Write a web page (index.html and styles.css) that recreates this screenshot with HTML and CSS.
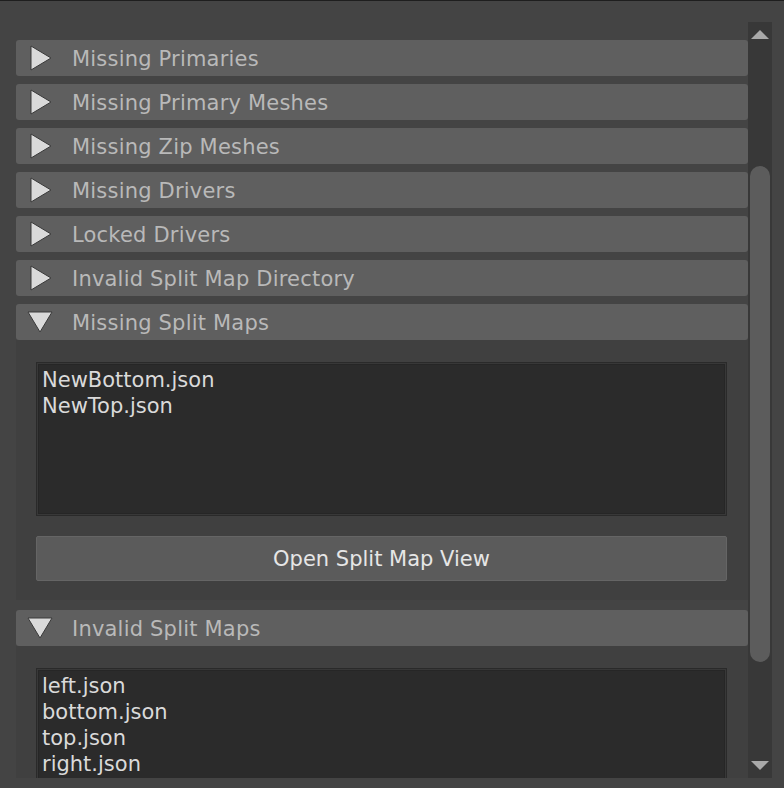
FILE: index.html
```html
<!DOCTYPE html>
<html>
<head>
<meta charset="utf-8">
<link rel="stylesheet" href="styles.css">
</head>
<body>
<div class="frame">
  <div class="content">
    <div class="section">
      <div class="header"><svg class="tri" viewBox="0 0 26 26"><polygon points="4,1 4,25 24,13" /></svg><span>Missing Primaries</span></div>
    </div>
    <div class="section">
      <div class="header"><svg class="tri" viewBox="0 0 26 26"><polygon points="4,1 4,25 24,13" /></svg><span>Missing Primary Meshes</span></div>
    </div>
    <div class="section">
      <div class="header"><svg class="tri" viewBox="0 0 26 26"><polygon points="4,1 4,25 24,13" /></svg><span>Missing Zip Meshes</span></div>
    </div>
    <div class="section">
      <div class="header"><svg class="tri" viewBox="0 0 26 26"><polygon points="4,1 4,25 24,13" /></svg><span>Missing Drivers</span></div>
    </div>
    <div class="section">
      <div class="header"><svg class="tri" viewBox="0 0 26 26"><polygon points="4,1 4,25 24,13" /></svg><span>Locked Drivers</span></div>
    </div>
    <div class="section">
      <div class="header"><svg class="tri" viewBox="0 0 26 26"><polygon points="4,1 4,25 24,13" /></svg><span>Invalid Split Map Directory</span></div>
    </div>
    <div class="section open">
      <div class="header"><svg class="tri" viewBox="0 0 26 26"><polygon points="1,3 25,3 13,23" /></svg><span>Missing Split Maps</span></div>
      <div class="body">
        <div class="list">
          <div>NewBottom.json</div>
          <div>NewTop.json</div>
        </div>
        <div class="button">Open Split Map View</div>
      </div>
    </div>
    <div class="section open">
      <div class="header"><svg class="tri" viewBox="0 0 26 26"><polygon points="1,3 25,3 13,23" /></svg><span>Invalid Split Maps</span></div>
      <div class="body">
        <div class="list tall">
          <div>left.json</div>
          <div>bottom.json</div>
          <div>top.json</div>
          <div>right.json</div>
        </div>
      </div>
    </div>
  </div>
  <div class="scrollbar">
    <svg class="arrow" viewBox="0 0 18 9"><polygon points="9,0 18,9 0,9" /></svg>
    <div class="track">
      <div class="thumb"></div>
    </div>
    <svg class="arrow" viewBox="0 0 18 9"><polygon points="0,0 18,0 9,9" /></svg>
  </div>
</div>
</body>
</html>
```

FILE: styles.css
```css
html, body {
  margin: 0;
  padding: 0;
}
body {
  background: #444444;
  width: 784px;
  height: 788px;
  overflow: hidden;
  border-top: 1px solid #1e1e1e;
  box-sizing: border-box;
  font-family: "DejaVu Sans", "Liberation Sans", sans-serif;
}
.frame {
  display: flex;
  height: 777px;
  padding-right: 12px;
}
.content {
  flex: 1;
  overflow: hidden;
  padding: 39px 0 0 16px;
  display: flex;
  flex-direction: column;
  gap: 8px;
}
.section.open + .section.open {
  margin-top: 2px;
}
.header {
  height: 36px;
  background: #5f5f5f;
  border-radius: 3px;
  display: flex;
  align-items: center;
  color: #b9b9b9;
  font-size: 21px;
  letter-spacing: 0.2px;
}
.header span {
  padding-top: 1px;
}
.tri {
  width: 26px;
  height: 26px;
  margin-left: 11px;
  margin-right: 19px;
  flex: none;
}
.tri polygon {
  fill: #dadada;
  stroke: #3a3a3a;
  stroke-width: 1;
}
.body {
  background: #404040;
  padding: 22px 21px 19px 20px;
  display: flex;
  flex-direction: column;
  gap: 20px;
}
.list {
  height: 154px;
  box-sizing: border-box;
  background: #2b2b2b;
  border: 1px solid #2a2a2a;
  box-shadow: inset 0 0 0 1px #383838, inset 0 0 0 2px #262626;
  padding: 4px 5px;
  color: #dadada;
  font-size: 21px;
  line-height: 26px;
}
.list.tall {
  height: 200px;
}
.button {
  height: 45px;
  box-sizing: border-box;
  background: #5b5b5b;
  border: 1px solid #656565;
  border-radius: 2px;
  display: flex;
  align-items: center;
  justify-content: center;
  color: #e6e6e6;
  font-size: 21px;
}
.scrollbar {
  width: 24px;
  margin-top: 21px;
  background: #383838;
  display: flex;
  flex-direction: column;
  align-items: center;
}
.arrow {
  width: 18px;
  height: 9px;
  flex: none;
  margin: 8px 0;
}
.arrow polygon {
  fill: #a9a9a9;
}
.track {
  flex: 1;
  width: 20px;
  display: flex;
  flex-direction: column;
}
.thumb {
  margin-top: 119px;
  height: 496px;
  background: #5c5c5c;
  border-radius: 10px;
}
```
